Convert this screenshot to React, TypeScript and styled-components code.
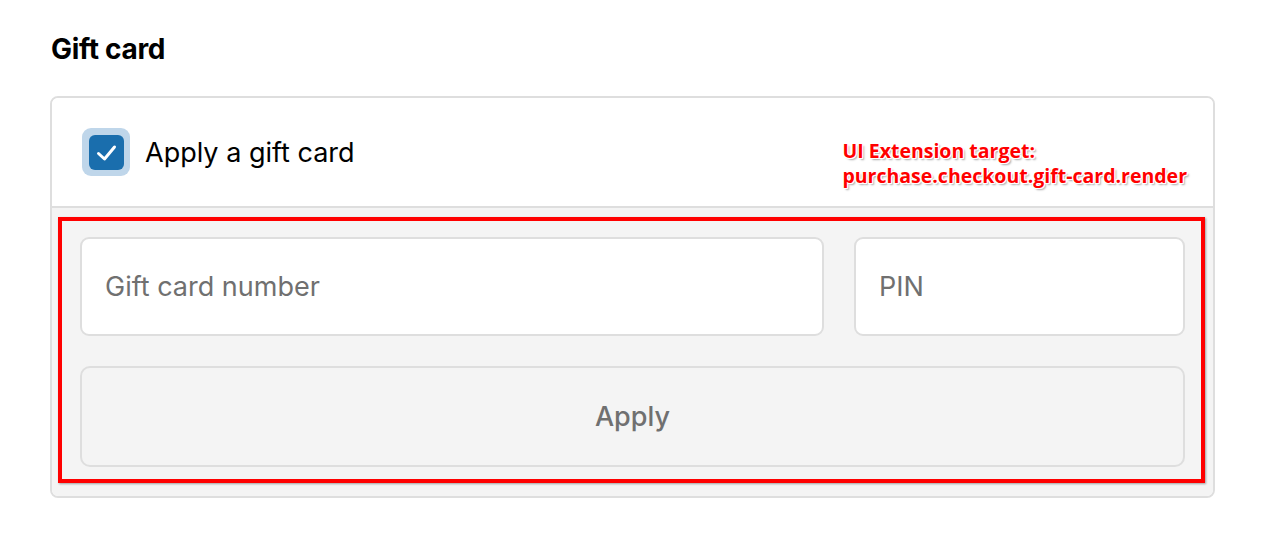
import React from 'react';
import styled, { createGlobalStyle } from 'styled-components';

const GlobalStyle = createGlobalStyle`
  body {
    margin: 0;
    background: #ffffff;
    font-family: Inter, "Liberation Sans", Arial, sans-serif;
    color: #000000;
  }
`;

const Page = styled.div`
  padding: 31px 57px 0 50px;
`;

const Heading = styled.h2`
  margin: 0 0 0 1px;
  font-size: 28px;
  line-height: 36px;
  font-weight: 700;
  letter-spacing: -0.3px;
`;

const Card = styled.section`
  margin-top: 29px;
  width: 1165px;
  box-sizing: border-box;
  border: 2px solid #dedede;
  border-radius: 8px;
  overflow: hidden;
`;

const TopSection = styled.div`
  position: relative;
  height: 108px;
  display: flex;
  align-items: center;
  gap: 15px;
  padding-left: 30px;
  box-sizing: border-box;
  background: #ffffff;
`;

const CheckHalo = styled.span`
  width: 48px;
  height: 48px;
  border-radius: 9px;
  background: #bfd6ea;
  display: flex;
  align-items: center;
  justify-content: center;
`;

const CheckBox = styled.span`
  width: 35px;
  height: 35px;
  border-radius: 6px;
  background: #1a6ead;
  display: flex;
  align-items: center;
  justify-content: center;
`;

const Label = styled.span`
  font-size: 27px;
  font-weight: 400;
  color: #000000;
`;

const TargetNote = styled.div`
  position: absolute;
  right: 26px;
  top: 40px;
  font-family: "Open Sans", "DejaVu Sans", sans-serif;
  font-weight: 700;
  font-size: 19.5px;
  line-height: 25px;
  color: #ff0000;
  text-shadow: 1px 0 0 #fff, -1px 0 0 #fff, 0 1px 0 #fff, 0 -1px 0 #fff,
    1px 1px 0 #fff, -1px -1px 0 #fff, 1px -1px 0 #fff, -1px 1px 0 #fff,
    2px 2px 2px rgba(0, 0, 0, 0.35);
`;

const LowerSection = styled.div`
  position: relative;
  border-top: 2px solid #dedede;
  background: #f4f4f4;
  padding: 29px 28px 29px 28px;
  display: flex;
  flex-direction: column;
  gap: 30px;
`;

const Outline = styled.div`
  position: absolute;
  left: 6px;
  top: 9px;
  right: 8px;
  bottom: 13px;
  border: 4px solid #ff0000;
  box-shadow: 1px 1px 2px rgba(0, 0, 0, 0.35);
  pointer-events: none;
`;

const FieldRow = styled.div`
  display: grid;
  grid-template-columns: 1fr 331px;
  gap: 30px;
`;

const Field = styled.input`
  height: 99px;
  box-sizing: border-box;
  border: 2px solid #dedede;
  border-radius: 9px;
  background: #ffffff;
  padding: 0 23px;
  font-family: Inter, "Liberation Sans", Arial, sans-serif;
  font-size: 27px;
  color: #000;
  outline: none;
  &::placeholder {
    color: #707070;
  }
`;

const ApplyButton = styled.button`
  height: 101px;
  border: 2px solid #dedede;
  border-radius: 10px;
  background: #f4f4f4;
  font-family: Inter, "Liberation Sans", Arial, sans-serif;
  font-size: 27px;
  font-weight: 500;
  color: #707070;
  cursor: pointer;
`;

const CheckIcon = () => (
  <svg width="35" height="35" viewBox="0 0 35 35" fill="none">
    <path
      d="M9.5 18.5 L15.5 24 L25.5 12"
      stroke="#ffffff"
      strokeWidth="3"
      strokeLinecap="round"
      strokeLinejoin="round"
    />
  </svg>
);

export default function App() {
  return (
    <Page>
      <GlobalStyle />
      <Heading>Gift card</Heading>
      <Card>
        <TopSection>
          <CheckHalo>
            <CheckBox>
              <CheckIcon />
            </CheckBox>
          </CheckHalo>
          <Label>Apply a gift card</Label>
          <TargetNote>
            UI Extension target:
            <br />
            purchase.checkout.gift-card.render
          </TargetNote>
        </TopSection>
        <LowerSection>
          <FieldRow>
            <Field placeholder="Gift card number" />
            <Field placeholder="PIN" />
          </FieldRow>
          <ApplyButton>Apply</ApplyButton>
          <Outline />
        </LowerSection>
      </Card>
    </Page>
  );
}
